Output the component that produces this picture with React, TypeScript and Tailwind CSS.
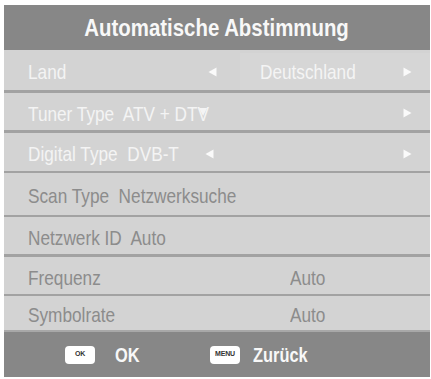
import { ReactNode } from "react";

const FONT = "font-['Liberation_Sans','Arial',sans-serif]";

// narrow look of the TV menu font: Liberation Sans squeezed horizontally
const T = ({ children, className = "" }: { children: ReactNode; className?: string }) => (
  <span className={`inline-block whitespace-pre origin-left scale-x-[0.82] ${className}`}>{children}</span>
);

const ArrowLeft = () => (
  <svg width="9" height="10" viewBox="0 0 9 10" className="shrink-0">
    <polygon points="8.5,0.5 8.5,9.5 0.5,5" fill="#fafafa" />
  </svg>
);

const ArrowRight = () => (
  <svg width="9" height="10" viewBox="0 0 9 10" className="shrink-0">
    <polygon points="0.5,0.5 0.5,9.5 8.5,5" fill="#fafafa" />
  </svg>
);

interface RowProps {
  children: ReactNode;
  className?: string;
}

const Row = ({ children, className = "" }: RowProps) => (
  <div className={`flex items-center bg-[#d3d3d3] pt-[3px] text-[21px] leading-none ${className}`}>
    {children}
  </div>
);

const Key = ({ label }: { label: string }) => (
  <span className="flex h-[18px] w-[30px] shrink-0 items-center justify-center rounded-[4px] bg-white text-[7px] font-bold tracking-tight text-[#333]">
    {label}
  </span>
);

const App = () => {
  return (
    <div className={`h-[379px] w-[431px] bg-white pt-[5px] pl-[4px] pr-[1px] ${FONT}`}>
      <div className="flex flex-col">
        <div className="flex h-[45px] items-center justify-center bg-[#878787] text-[24px] font-bold text-[#f8f8f8]">
          <span className="inline-block whitespace-pre scale-x-[0.85]">Automatische Abstimmung</span>
        </div>

        <Row className="h-[43px] border-b-[3px] border-[#a2a2a2] text-[#f4f4f4]">
          <div className="flex h-full w-[236px] items-center pl-[24px]">
            <T>Land</T>
            <span className="ml-auto mr-[23px] flex">
              <ArrowLeft />
            </span>
          </div>
          <div className="flex h-full flex-1 items-center bg-[#d6d6d6] pl-[20px]">
            <T>Deutschland</T>
            <span className="ml-auto mr-[18px] flex">
              <ArrowRight />
            </span>
          </div>
        </Row>

        <Row className="h-[40px] border-b-[3px] border-[#a2a2a2] pl-[24px] text-[#f4f4f4]">
          <T>
            {"Tuner Type  ATV + DT"}
            <span className="relative">
              V
              <svg width="11" height="10" viewBox="0 0 11 10" className="absolute left-[1px] top-[5px]">
                <polygon points="0.5,1 10.5,1 5.5,9" fill="#f4f4f4" />
              </svg>
            </span>
          </T>
          <span className="ml-auto mr-[18px] flex">
            <ArrowRight />
          </span>
        </Row>

        <Row className="h-[40px] border-b-[2px] border-[#a2a2a2] pl-[24px] text-[#f4f4f4]">
          <span className="w-[177px]">
            <T>{"Digital Type  DVB-T"}</T>
          </span>
          <span className="flex">
            <ArrowLeft />
          </span>
          <span className="ml-auto mr-[18px] flex">
            <ArrowRight />
          </span>
        </Row>

        <Row className="h-[44px] border-b-[2px] border-[#a2a2a2] pl-[24px] text-[#8c8c8c]">
          <T>{"Scan Type  Netzwerksuche"}</T>
        </Row>

        <Row className="h-[40px] border-b-[3px] border-[#a2a2a2] pl-[24px] text-[#8c8c8c]">
          <T>{"Netzwerk ID  Auto"}</T>
        </Row>

        <Row className="h-[39px] border-b-[2px] border-[#a2a2a2] pl-[24px] text-[#8c8c8c]">
          <span className="w-[262px]">
            <T>Frequenz</T>
          </span>
          <T>Auto</T>
        </Row>

        <Row className="h-[36px] border-b-[2px] border-[#a8a8a8] pl-[24px] text-[#8c8c8c]">
          <span className="w-[262px]">
            <T>Symbolrate</T>
          </span>
          <T>Auto</T>
        </Row>

        <div className="flex h-[45px] items-center bg-[#878787] pl-[61px] text-[20px] font-bold text-[#f8f8f8]">
          <Key label="OK" />
          <span className="ml-[20px] w-[95px]">
            <T className="scale-x-[0.72]">OK</T>
          </span>
          <Key label="MENU" />
          <span className="ml-[13px]">
            <T className="scale-x-[0.72]">Zurück</T>
          </span>
        </div>
      </div>
    </div>
  );
};

export default App;
